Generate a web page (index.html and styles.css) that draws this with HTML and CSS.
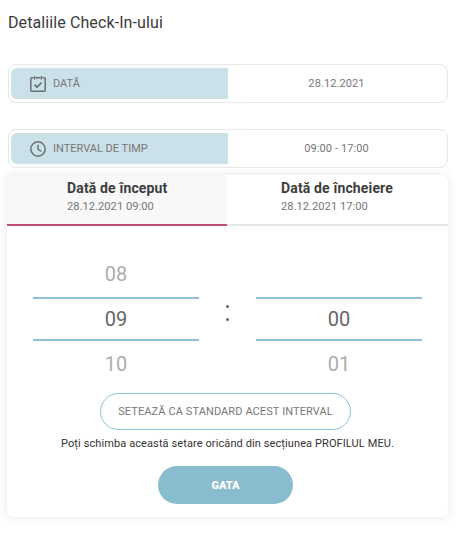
FILE: index.html
```html
<!DOCTYPE html>
<html lang="ro">
<head>
<meta charset="utf-8">
<title>Detaliile Check-In-ului</title>
<link rel="stylesheet" href="styles.css">
</head>
<body>
<h1 class="title">Detaliile Check-In-ului</h1>
<div class="row row-date">
  <div class="row-label">
    <svg class="row-icon" viewBox="0 0 16 16" width="16" height="16"><path d="M3.500 1.800H1.800a1 1 0 0 0-1 1v11.400a1 1 0 0 0 1 1h12.400a1 1 0 0 0 1-1V2.800a1 1 0 0 0-1-1H12.500M6 1.800h4M4.700 0v3.400M11.300 0v3.400" fill="none" stroke="#6b7072" stroke-width="1.500"/><path d="M4.500 8.700l2.500 2.500 4.600-4.700" fill="none" stroke="#6b7072" stroke-width="1.700"/></svg>
    <span>DATĂ</span>
  </div>
  <div class="row-value">28.12.2021</div>
</div>
<div class="row row-time">
  <div class="row-label">
    <svg class="row-icon" viewBox="0 0 16 16" width="16" height="16"><circle cx="8" cy="8" r="7.200" fill="none" stroke="#6b7072" stroke-width="1.500"/><path d="M8 3.800V8.400l3.400 2" fill="none" stroke="#6b7072" stroke-width="1.500"/></svg>
    <span>INTERVAL DE TIMP</span>
  </div>
  <div class="row-value">09:00 - 17:00</div>
</div>
<section class="card">
  <div class="tabs">
    <div class="tab tab-active">
      <div class="tab-inner">
        <div class="tab-title">Dată de început</div>
        <div class="tab-sub">28.12.2021 09:00</div>
      </div>
    </div>
    <div class="tab">
      <div class="tab-inner">
        <div class="tab-title">Dată de încheiere</div>
        <div class="tab-sub">28.12.2021 17:00</div>
      </div>
    </div>
  </div>
  <div class="picker">
    <div class="wheel">
      <div class="wheel-item">08</div>
      <div class="wheel-item wheel-current">09</div>
      <div class="wheel-item">10</div>
    </div>
    <div class="colon"><span class="colon-dot"></span><span class="colon-dot"></span></div>
    <div class="wheel">
      <div class="wheel-item wheel-empty"></div>
      <div class="wheel-item wheel-current">00</div>
      <div class="wheel-item">01</div>
    </div>
  </div>
  <button class="btn-outline" type="button">SETEAZĂ CA STANDARD ACEST INTERVAL</button>
  <p class="note">Poți schimba această setare oricând din secțiunea PROFILUL MEU.</p>
  <button class="btn-solid" type="button">GATA</button>
</section>
</body>
</html>
```

FILE: styles.css
```css
* { box-sizing: border-box; }
html, body { background: #fff; }
body {
  margin: 0;
  padding: 0 19px 0 8px;
  height: 540px;
  overflow: hidden;
  font-family: Roboto, "Liberation Sans", sans-serif;
  color: #333;
}
.title {
  margin: 0;
  padding-top: 13px;
  height: 64px;
  font-size: 16px;
  line-height: 20px;
  font-weight: 400;
  letter-spacing: 0.1px;
  color: #3a3a3a;
}
.row {
  display: flex;
  height: 39px;
  padding: 3px 2px;
  border: 1px solid #e6e6e6;
  border-radius: 8px;
  background: #fff;
}
.row-time { margin-top: 26px; }
.row-label {
  width: 217px;
  display: flex;
  align-items: center;
  gap: 7px;
  padding-left: 19px;
  background: #cbe1e9;
  border-radius: 6px 0 0 6px;
  font-size: 11px;
  color: #777;
}
.row-icon { flex: none; }
.row-value {
  flex: 1;
  display: flex;
  align-items: center;
  justify-content: center;
  font-size: 11px;
  color: #777;
  letter-spacing: 0.1px;
}
.card {
  margin: 7px 0 0 -1px;
  width: 441px;
  height: 342px;
  display: flex;
  flex-direction: column;
  align-items: center;
  background: #fff;
  border-radius: 6px;
  box-shadow: 0 0 10px rgba(0, 0, 0, 0.1);
}
.tabs {
  display: flex;
  width: 100%;
  height: 51px;
  border-bottom: 2px solid #e6e6e6;
}
.tab { flex: 0 0 221px; height: 51px; }
.tab-active {
  flex: 0 0 220px;
  background: #f8f8f8;
  border-bottom: 2px solid #c24d74;
  border-radius: 6px 0 0 0;
}
.tab-inner { padding: 3px 0 0 60px; }
.tab + .tab .tab-inner { padding-left: 54px; }
.tab-title {
  font-size: 14px;
  line-height: 20px;
  font-weight: 700;
  letter-spacing: 0.15px;
  color: #3d3d3d;
}
.tab-sub {
  margin-top: 1px;
  font-size: 11.2px;
  line-height: 16px;
  color: #777;
}
.picker {
  display: flex;
  width: 100%;
  padding: 25px 26px 0;
  justify-content: space-between;
}
.wheel { width: 166px; }
.wheel-item {
  height: 45px;
  display: flex;
  align-items: center;
  justify-content: center;
  font-size: 20px;
  color: #adadad;
}
.wheel-current {
  height: 44px;
  margin-top: 1px;
  border-top: 2px solid #8fc0d3;
  border-bottom: 2px solid #8fc0d3;
  color: #666;
}
.colon {
  display: flex;
  flex-direction: column;
  gap: 10px;
  margin: 54px 0 0;
  height: 16px;
}
.colon-dot {
  width: 3px;
  height: 3px;
  border-radius: 50%;
  background: #666;
}
.btn-outline {
  margin: 7px 4px 0 0;
  width: 251px;
  height: 37px;
  border: 1px solid #8fc0d3;
  border-radius: 19px;
  background: #fff;
  font-family: inherit;
  font-size: 11px;
  letter-spacing: 0.1px;
  color: #777;
}
.note {
  margin: 6px 0 0;
  font-size: 11px;
  line-height: 16px;
  color: #333;
  letter-spacing: 0.1px;
}
.btn-solid {
  margin: 14px 4px 0 0;
  width: 135px;
  height: 38px;
  border: 0;
  border-radius: 19px;
  background: #8abcd0;
  font-family: inherit;
  font-size: 11px;
  font-weight: 900;
  color: #fff;
}
```
